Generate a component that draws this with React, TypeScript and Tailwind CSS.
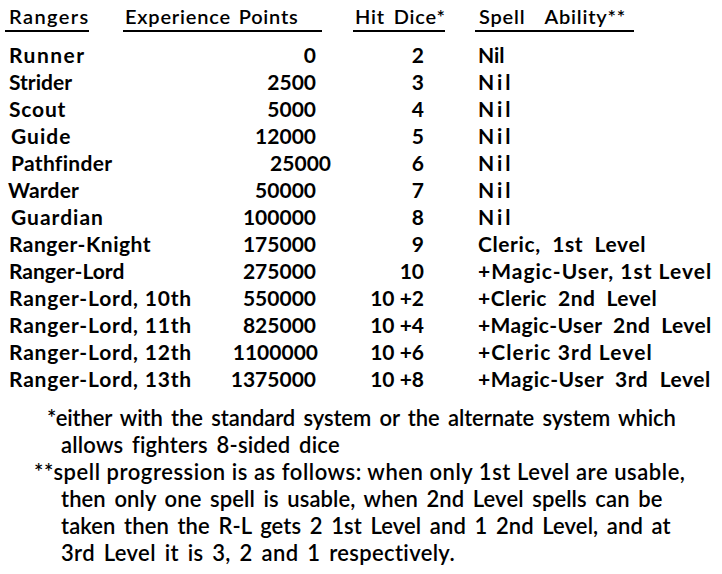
import React from "react";

type Row = { name: string; xp: string; hd: string; spell: string; nameCls?: string; xpCls?: string; spellCls?: string };

const rows: Row[] = [
  { name: "Runner", xp: "0", hd: "2", spell: "Nil", nameCls: "tracking-[1.5px]" },
  { name: "Strider", xp: "2500", hd: "3", spell: "Nil", spellCls: "tracking-[3px]" },
  { name: "Scout", xp: "5000", hd: "4", spell: "Nil", nameCls: "tracking-[0.8px]", spellCls: "tracking-[3px]" },
  { name: "Guide", xp: "12000", hd: "5", spell: "Nil", nameCls: "pl-[2px] tracking-[1px]", spellCls: "tracking-[3px]" },
  { name: "Pathfinder", xp: "25000", hd: "6", spell: "Nil", nameCls: "pl-[2px] tracking-[0.3px]", xpCls: "-mr-[15px]", spellCls: "tracking-[3px]" },
  { name: "Warder", xp: "50000", hd: "7", spell: "Nil", nameCls: "-ml-[1px] tracking-[0.2px]", spellCls: "tracking-[3px]" },
  { name: "Guardian", xp: "100000", hd: "8", spell: "Nil", nameCls: "pl-[2px] tracking-[1px]", spellCls: "tracking-[3px]" },
  { name: "Ranger-Knight", xp: "175000", hd: "9", spell: "Cleric,  1st  Level", nameCls: "tracking-[0.5px]", spellCls: "tracking-[0.6px]" },
  { name: "Ranger-Lord", xp: "275000", hd: "10", spell: "+Magic-User, 1st Level", spellCls: "tracking-[1px]" },
  { name: "Ranger-Lord, 10th", xp: "550000", hd: "10 +2", spell: "+Cleric  2nd  Level", nameCls: "tracking-[0.8px]", spellCls: "tracking-[0.45px]" },
  { name: "Ranger-Lord, 11th", xp: "825000", hd: "10 +4", spell: "+Magic-User  2nd  Level", nameCls: "tracking-[0.8px]", spellCls: "tracking-[0.4px]" },
  { name: "Ranger-Lord, 12th", xp: "1100000", hd: "10 +6", spell: "+Cleric 3rd Level", nameCls: "tracking-[0.8px]", xpCls: "-mr-[2px]", spellCls: "tracking-[1.1px]" },
  { name: "Ranger-Lord, 13th", xp: "1375000", hd: "10 +8", spell: "+Magic-User  3rd  Level", nameCls: "tracking-[0.8px]", spellCls: "tracking-[0.55px]" },
];

export default function App() {
  return (
    <div className="w-[722px] h-[574px] bg-white text-black overflow-hidden font-['Lato','Liberation_Sans',sans-serif]">
      {/* header */}
      <div className="flex items-end pt-[6px] text-[20px] leading-[20px] font-semibold tracking-[0.8px]">
        <div className="ml-[5px] w-[84px] border-b-2 border-black pb-[4px] pl-[4px] whitespace-nowrap tracking-[1.4px]">Rangers</div>
        <div className="ml-[34px] w-[199px] border-b-2 border-black pb-[4px] pl-[2px] whitespace-nowrap [word-spacing:2px]">Experience Points</div>
        <div className="ml-[31px] w-[92px] border-b-2 border-black pb-[4px] pl-[2px] whitespace-nowrap [word-spacing:3px]">Hit Dice*</div>
        <div className="ml-[30px] w-[159px] border-b-2 border-black pb-[4px] pl-[4px] whitespace-nowrap [word-spacing:14px]">Spell Ability**</div>
      </div>

      {/* table */}
      <div className="mt-[9px] pl-[9px] text-[21px] leading-[27px] font-bold">
        {rows.map((r) => (
          <div key={r.name} className="grid grid-cols-[200px_107px_108px_1fr] whitespace-pre">
            <div className={r.nameCls ?? ""}>{r.name}</div>
            <div className={"text-right " + (r.xpCls ?? "")}>{r.xp}</div>
            <div className="text-right">{r.hd}</div>
            <div className={"pl-[54px] " + (r.spellCls ?? "")}>{r.spell}</div>
          </div>
        ))}
      </div>

      {/* footnotes */}
      <div className="mt-[12px] text-[22px] leading-[27px] font-semibold whitespace-nowrap [word-spacing:3px] tracking-[0.2px]">
        <div className="ml-[47px] tracking-[-0.1px]">*either with the standard system or the alternate system which</div>
        <div className="ml-[61px]">allows fighters 8-sided dice</div>
        <div className="ml-[34px] [word-spacing:0px] tracking-[0.55px]">**spell progression is as follows: when only 1st Level are usable,</div>
        <div className="ml-[61px] tracking-[0.1px]">then only one spell is usable, when 2nd Level spells can be</div>
        <div className="ml-[61px] tracking-[0.1px]">taken then the R-L gets 2 1st Level and 1 2nd Level, and at</div>
        <div className="ml-[61px] tracking-[0.35px]">3rd Level it is 3, 2 and 1 respectively.</div>
      </div>
    </div>
  );
}
